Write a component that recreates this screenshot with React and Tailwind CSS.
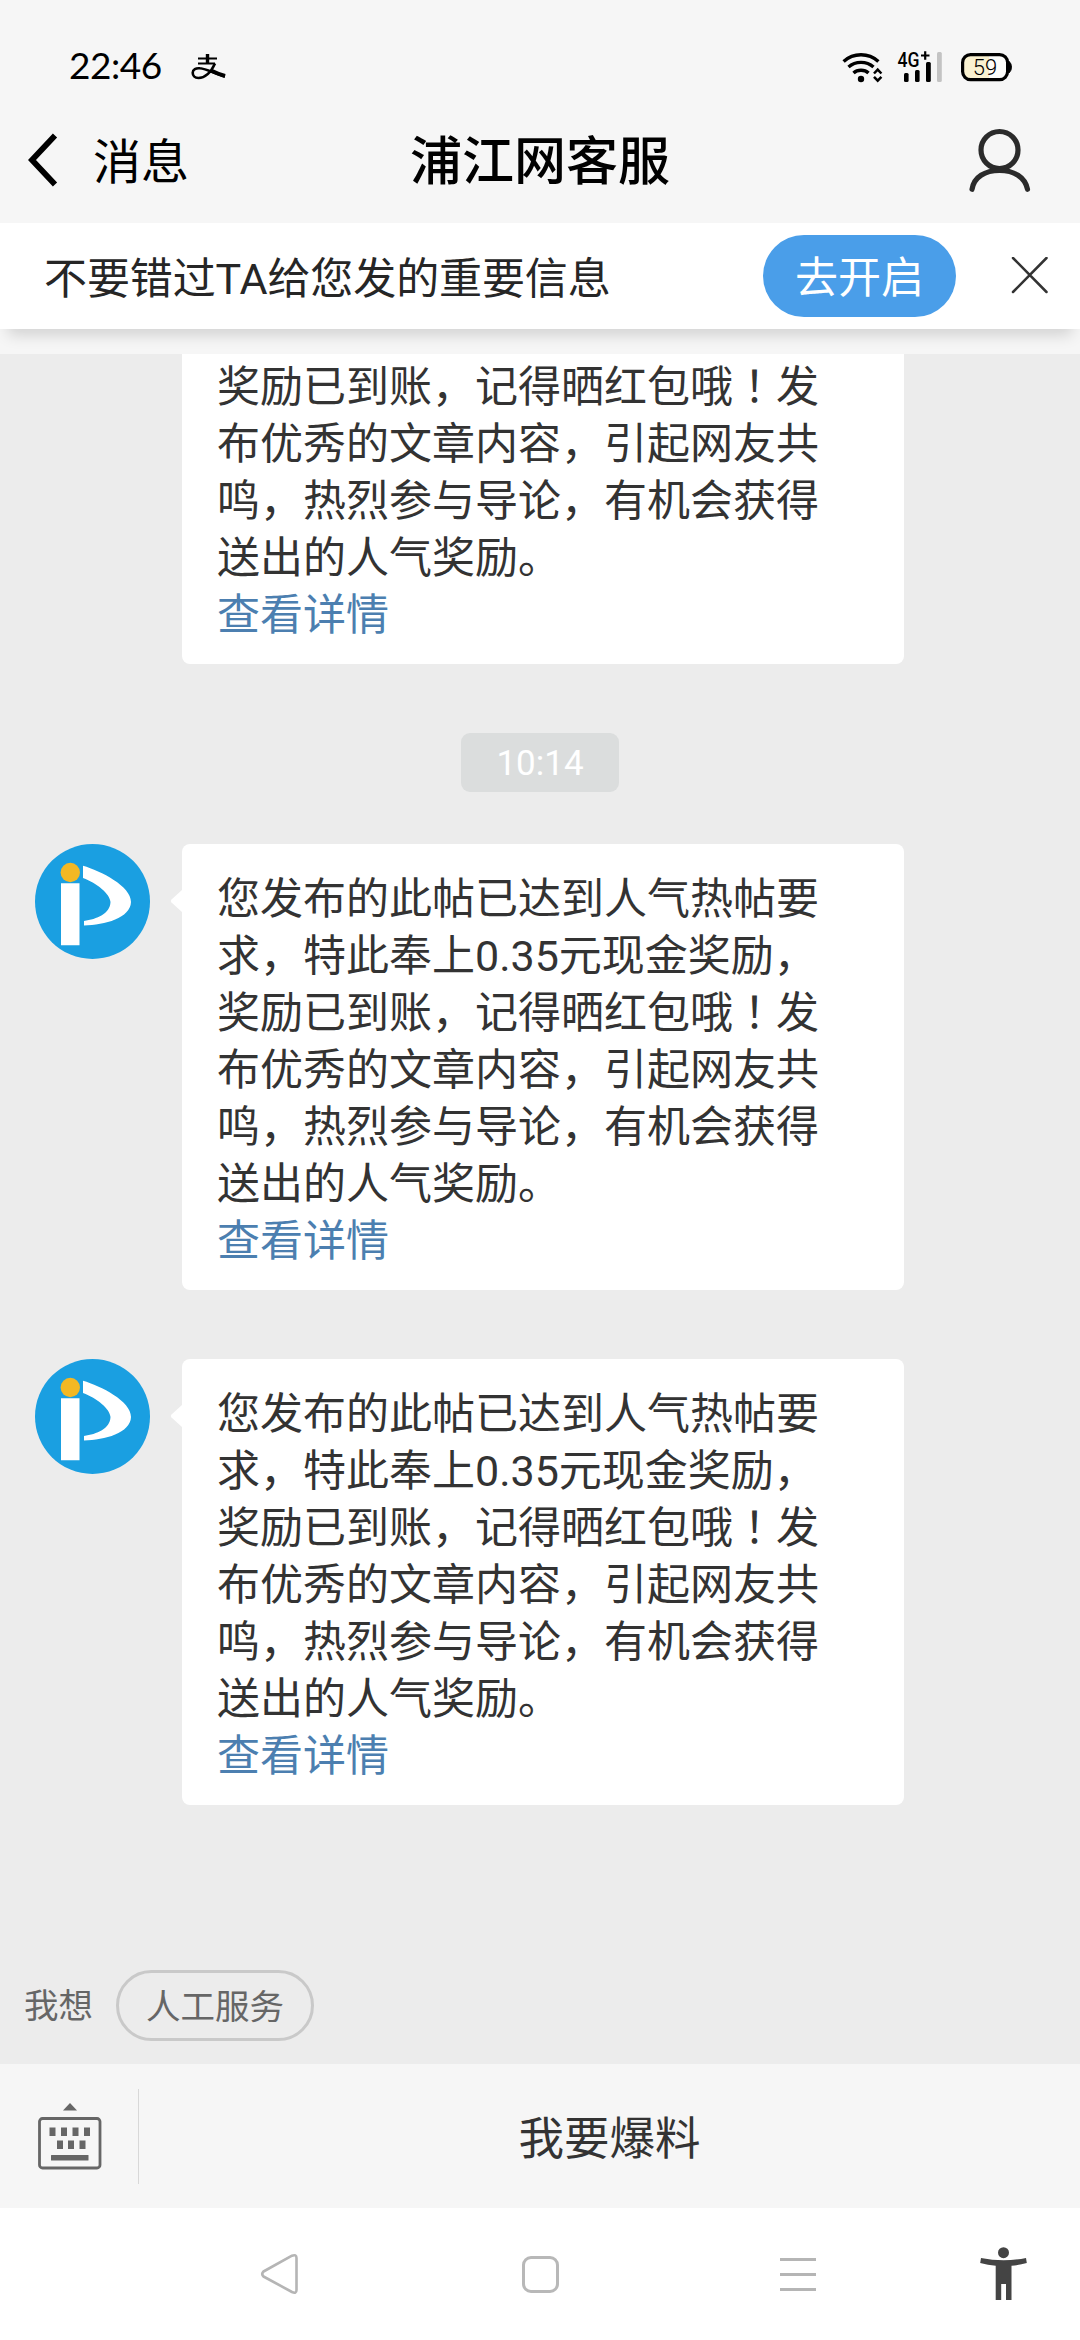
import React from 'react';

const MESSAGE_START = '您发布的此帖已达到人气热帖要求，特此奉上0.35元现金奖励，';
const MESSAGE_MID = '奖励已到账，记得晒红包哦';
const MESSAGE_END = '发布优秀的文章内容，引起网友共鸣，热烈参与导论，有机会获得送出的人气奖励。';

function StatusBar() {
  return (
    <div className="flex h-[102px] items-end justify-between pl-[69px] pr-[68px]">
      <div className="flex h-[70px] items-center">
        <span className="w-[96px] pb-[6px] font-['Lato',sans-serif] text-[37px] leading-none tracking-[-0.5px] text-black">
          22:46
        </span>
        <svg className="ml-[26px] h-[28px] w-[36px]" viewBox="0 0 36 28" fill="none" stroke="#000">
          <path d="M7 5.5h19M7 10.5h17" strokeWidth="2.2" />
          <path d="M16.5 1v9.5" strokeWidth="3.4" />
          <path d="M24 10.5C20 19 15 25 7.5 25 3.5 25 1.7 22.5 1.7 19.8 1.7 16.5 5 14.8 9 15.3 16 16 24 21 34 23.5" strokeWidth="2.6" />
          <path d="M20 17.5c5 2.5 9 4 14 5.5" strokeWidth="4" />
        </svg>
      </div>

      <div className="flex h-[70px] items-center">
        <svg className="h-[32px] w-[42px]" viewBox="842 50 42 32" fill="none" stroke="#000">
          <path d="M843.6 60.5C853.5 51.5 868.5 51.5 878.4 60.5" strokeWidth="3.4" />
          <path d="M848.5 66C855.5 59.8 866.5 59.8 873.5 66" strokeWidth="3.4" />
          <path d="M853.5 72C857.5 68.3 864.5 68.3 868.5 72" strokeWidth="3.4" />
          <circle cx="861" cy="78" r="3.2" fill="#000" stroke="none" />
          <path d="M874 72.5l3.7-3.9 3.7 3.9M874 75.8l3.7 3.9 3.7-3.9" strokeWidth="2.5" />
        </svg>
        <svg className="ml-[13px] h-[32px] w-[46px] overflow-visible" viewBox="897 50 46 32">
          <text x="897.5" y="66" fontFamily="Roboto" fontSize="20" fontWeight="500" textLength="22" lengthAdjust="spacingAndGlyphs">4G</text>
          <path d="M921 54.5h8.5M925.2 50.3v8.5" stroke="#000" strokeWidth="2.2" />
          <rect x="904" y="72" width="4.6" height="9" rx="1.5" />
          <rect x="915" y="69" width="4.6" height="12" rx="1.5" />
          <rect x="926" y="61" width="4.8" height="20" rx="1.5" />
          <rect x="937" y="51" width="4.8" height="30" rx="1.5" fill="#c3c3c3" />
        </svg>
        <svg className="ml-[17px] h-[32px] w-[52px]" viewBox="960 50 52 32">
          <rect x="962.6" y="53.6" width="45" height="25" rx="8" fill="#fdfdfb" />
          <path d="M989 53.6H970.6a8 8 0 0 0-8 8v9a8 8 0 0 0 8 8H989z" fill="#f9f1d0" />
          <rect x="962.6" y="53.6" width="45" height="25" rx="8" fill="none" stroke="#000" strokeWidth="3.2" />
          <path d="M1009 60.5c3.2 2 3.2 9.2 0 11.2z" stroke="#000" />
          <text x="985" y="73.5" fontFamily="Roboto" fontSize="22" fontWeight="300" textAnchor="middle">59</text>
        </svg>
      </div>
    </div>
  );
}

function Header() {
  return (
    <div className="grid h-[121px] grid-cols-3 items-center px-[28px] pb-[6px]">
      <div className="flex items-center gap-[35px]">
        <svg className="h-[54px] w-[30px]" viewBox="0 0 30 54" fill="none" stroke="#000" strokeWidth="5.8">
          <path d="M27 2.5L4 27 27 51.5" />
        </svg>
        <span className="pt-[6px] text-[48px] leading-[60px] text-black">消息</span>
      </div>
      <h1 className="whitespace-nowrap pt-[6px] text-center text-[52px] font-medium leading-[60px] text-black">浦江网客服</h1>
      <svg className="mr-[20px] h-[66px] w-[64px] justify-self-end" viewBox="968 127 64 66" fill="none" stroke="#2b2b2b" strokeWidth="5.2" strokeLinecap="round">
        <circle cx="999.5" cy="150" r="18.5" />
        <path d="M972 189.3C974 177 985 170.5 999.5 170.5S1025 177 1027.5 189.3" />
      </svg>
    </div>
  );
}

function NoticeBar() {
  return (
    <div className="relative z-10 flex h-[106px] items-center bg-white pl-[44px] pr-[31px] shadow-[0_14px_14px_-8px_rgba(0,0,0,0.15)]">
      <span className="flex-1 whitespace-nowrap pt-[6px] text-[43px] leading-[60px] tracking-[-0.1px] text-[#262626]">不要错过TA给您发的重要信息</span>
      <button className="h-[82px] w-[193px] rounded-full bg-[#4a9ee9] pt-[5px] text-[43px] leading-[77px] text-white">去开启</button>
      <svg className="ml-[55px] h-[38px] w-[38px]" viewBox="0 0 38 38" fill="none" stroke="#333" strokeWidth="2.5" strokeLinecap="round">
        <path d="M2 1l33.5 34M35.5 1L2 35" />
      </svg>
    </div>
  );
}

function Avatar() {
  return (
    <svg className="h-[115px] w-[115px] shrink-0" viewBox="0 0 115 115">
      <circle cx="57.5" cy="57.5" r="57.5" fill="#1a9fe1" />
      <circle cx="35.3" cy="28.5" r="9.7" fill="#f3b824" />
      <path d="M26 39.2h18.5v62H26z" fill="#fff" />
      <path d="M48 21.7C66 27 96 42 96 58 95.5 74 70 81 49 81.5v-4.5C62 75 75 70 75.5 58 75 50 62 39 48 34z" fill="#fff" />
    </svg>
  );
}

function MessageBody({ partial }) {
  return (
    <div className="w-[722px] rounded-[8px] bg-white pb-[20px] pl-[35px] pt-[27px] text-[43px] leading-[57px] text-[#333]">
      <p className="w-[606px]">
        {!partial && MESSAGE_START}
        {MESSAGE_MID}
        <span className="font-['Noto_Sans_CJK_JP',sans-serif] leading-none">！</span>
        {MESSAGE_END}
      </p>
      <a className="block text-[#4c7fb0]">查看详情</a>
    </div>
  );
}

function Message() {
  return (
    <div className="flex items-start pl-[35px]">
      <Avatar />
      <svg className="ml-[20px] mt-[46px] h-[22px] w-[12px] shrink-0" viewBox="0 0 12 22">
        <path d="M12 0v22L1.5 12.5q-1.5-1.5 0-3z" fill="#fff" />
      </svg>
      <MessageBody />
    </div>
  );
}

function KeyboardIcon() {
  return (
    <svg className="h-[68px] w-[64px]" viewBox="0 0 64 68" fill="#666">
      <path d="M32 1l7 7.5H25z" />
      <rect x="1.5" y="16.5" width="60.5" height="49.5" rx="3" fill="none" stroke="#666" strokeWidth="2.8" />
      <path d="M11.5 25.5h6v8.5h-6zM23 25.5h6v8.5h-6zM34.5 25.5h6v8.5h-6zM46 25.5h6v8.5h-6z" />
      <path d="M19 38.5h6v8.5h-6zM30 38.5h6v8.5h-6zM41.5 38.5h6v8.5h-6z" />
      <rect x="13" y="53" width="37.5" height="5.5" rx="0.5" />
    </svg>
  );
}

function NavigationBar() {
  return (
    <div className="flex h-[132px] items-center bg-white pl-[260px]">
      <svg className="h-[42px] w-[40px]" viewBox="0 0 40 42" fill="none" stroke="#b5b5b5" strokeWidth="2.6" strokeLinejoin="round">
        <path d="M3.5 18.5L32 2.7Q36.5 1 36.5 5V37Q36.5 41 32 39L3.5 23.5Q1 21 3.5 18.5z" />
      </svg>
      <div className="ml-[222px] h-[37px] w-[37px] rounded-[9px] border-[3px] border-[#b8b8b8]" />
      <div className="ml-[221px] flex w-[36px] flex-col gap-[12px]">
        <div className="h-[3px] bg-[#b5b5b5]" />
        <div className="h-[3px] bg-[#b5b5b5]" />
        <div className="h-[3px] bg-[#b5b5b5]" />
      </div>
      <svg className="ml-[164px] h-[54px] w-[48px]" viewBox="0 0 48 54" fill="#444">
        <circle cx="23.5" cy="5.7" r="5.5" />
        <path d="M1 11q22.5 4.5 45 0l.8 5q-7.5 2-15.3 2.7V53H26V37h-4.8v16h-5.5V18.7Q8 18 .2 16z" />
      </svg>
    </div>
  );
}

export default function App() {
  return (
    <div className="flex h-[2340px] w-[1080px] flex-col overflow-hidden bg-[#f6f6f6] font-['Roboto','Noto_Sans_CJK_SC',sans-serif]">
      <StatusBar />
      <Header />
      <NoticeBar />

      <main className="mt-[25px] flex flex-1 flex-col bg-[#ececec]">
        {/* older message, scrolled under the notice bar */}
        <div className="flex h-[310px] items-end overflow-hidden pl-[182px]">
          <MessageBody partial />
        </div>
        <div className="mt-[69px] h-[59px] w-[158px] self-center rounded-[9px] bg-[#dbdddd] text-center text-[35px] leading-[62px] text-white">
          10:14
        </div>
        <div className="mt-[52px] flex flex-col gap-[69px]">
          <Message />
          <Message />
        </div>
        <div className="mb-[23px] mt-auto flex items-center pl-[24px] text-[34.5px] text-[#666]">
          <span className="pt-[3px]">我想</span>
          <button className="ml-[23px] h-[71px] w-[198px] rounded-full border-[3px] border-[#c9c9c9] pt-[3px] leading-[62px]">人工服务</button>
        </div>
      </main>

      <div className="flex h-[144px] items-center pl-[38px]">
        <KeyboardIcon />
        <div className="ml-[36px] h-[95px] w-px bg-[#d8d8d8]" />
        <div className="flex-1 pt-[8px] text-center text-[45.5px] leading-[60px] text-[#333]">我要爆料</div>
      </div>
      <NavigationBar />
    </div>
  );
}
